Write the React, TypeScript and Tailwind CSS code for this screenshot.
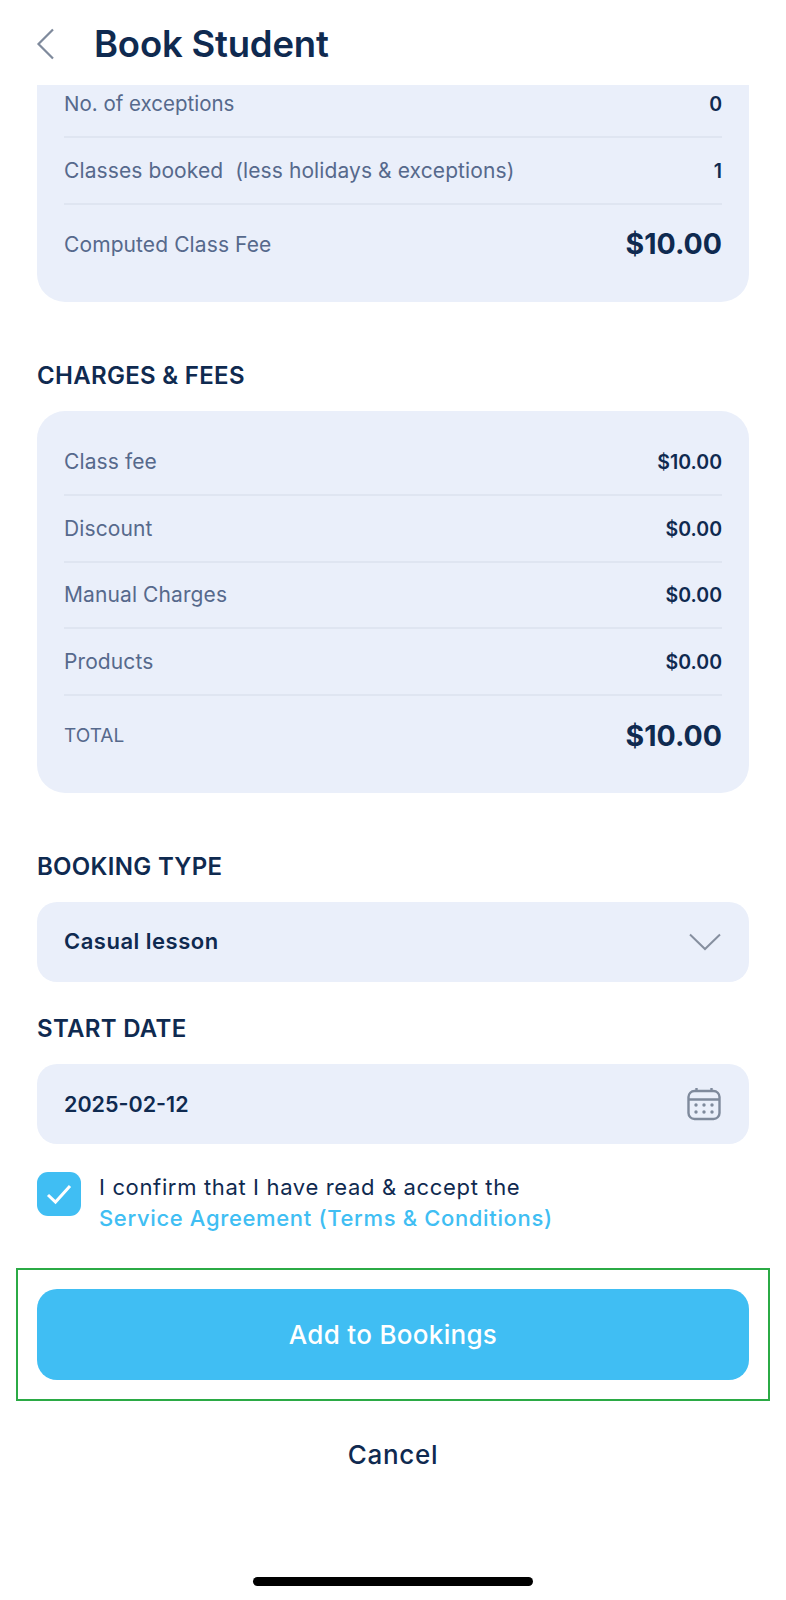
const font = { fontFamily: '"Inter", "Open Sans", sans-serif' };

function Row({ label, value, big, last }: { label: string; value: string; big?: boolean; last?: boolean }) {
  return (
    <div className={`flex items-center justify-between ${last ? "h-[80px]" : "h-[66.6px] border-b-2 border-[#DFE5F1]"}`}>
      <span className={`${label === "TOTAL" ? "text-[19px]" : "text-[21px] tracking-[0.1px]"} whitespace-pre text-[#56698C]`}>{label}</span>
      <span className={big ? "text-[28.5px] font-bold text-[#0F2A50]" : "pt-[2px] text-[19.5px] font-semibold text-[#0F2A50]"}>{value}</span>
    </div>
  );
}

function Title({ children }: { children: string }) {
  return <h2 className="text-[24px] font-semibold leading-none tracking-[0.3px] text-[#0F2A50]">{children}</h2>;
}

export default function App() {
  return (
    <div style={font} className="h-[1600px] w-[786px] overflow-hidden bg-white">
      <header className="flex h-[85px] items-center pl-[36px]">
        <svg width="20" height="32" viewBox="0 0 20 32" fill="none" className="mt-[3px]">
          <path d="M17 1.5 2.5 16 17 30.5" stroke="#7F8A9C" strokeWidth="2.2" />
        </svg>
        <h1 className="ml-[38px] mt-[4px] text-[36.5px] font-semibold tracking-[-0.2px] text-[#0F2A50]">Book Student</h1>
      </header>

      <div className="mx-[37px]">
        <section className="rounded-b-[28px] bg-[#EAEFFA] px-[27px] pb-[17px]">
          <div className="flex h-[53px] items-center justify-between border-b-2 border-[#DFE5F1] pb-[12px]">
            <span className="text-[20.5px] text-[#56698C]">No. of exceptions</span>
            <span className="text-[19.5px] font-semibold text-[#0F2A50]">0</span>
          </div>
          <Row label="Classes booked  (less holidays & exceptions)" value="1" />
          <Row label="Computed Class Fee" value="$10.00" big last />
        </section>

        <div className="mt-[62px]">
          <Title>CHARGES & FEES</Title>
        </div>
        <section className="mt-[23px] rounded-[28px] bg-[#EAEFFA] px-[27px] pt-[19px] pb-[17px]">
          <Row label="Class fee" value="$10.00" />
          <Row label="Discount" value="$0.00" />
          <Row label="Manual Charges" value="$0.00" />
          <Row label="Products" value="$0.00" />
          <Row label="TOTAL" value="$10.00" big last />
        </section>

        <div className="mt-[62px]">
          <Title>BOOKING TYPE</Title>
        </div>
        <div className="mt-[23px] flex h-[80px] items-center justify-between rounded-[20px] bg-[#EAEFFA] pl-[27px] pr-[28px]">
          <span className="text-[22px] font-semibold tracking-[0.5px] text-[#0F2A50]">Casual lesson</span>
          <svg width="32" height="18" viewBox="0 0 32 18" fill="none">
            <path d="M1 1.5 16 16 31 1.5" stroke="#868F9F" strokeWidth="2" />
          </svg>
        </div>

        <div className="mt-[35px]">
          <Title>START DATE</Title>
        </div>
        <div className="mt-[23px] flex h-[80px] items-center justify-between rounded-[20px] bg-[#EAEFFA] pl-[27px] pr-[28px]">
          <span className="text-[21.5px] font-semibold text-[#0F2A50]">2025-02-12</span>
          <svg width="34" height="34" viewBox="0 0 34 34" fill="none" stroke="#7F8A9C" strokeWidth="2.4">
            <rect x="1.5" y="4" width="31" height="28" rx="6" />
            <path d="M1.5 12.5h31M9.5 1v4M24.5 1v4" />
            <g fill="#7F8A9C" stroke="none">
              <circle cx="9" cy="18" r="1.7" />
              <circle cx="17" cy="18" r="1.7" />
              <circle cx="25" cy="18" r="1.7" />
              <circle cx="9" cy="25" r="1.7" />
              <circle cx="17" cy="25" r="1.7" />
              <circle cx="25" cy="25" r="1.7" />
            </g>
          </svg>
        </div>

        <div className="mt-[28px] flex items-start">
          <div className="flex h-[44px] w-[44px] shrink-0 items-center justify-center rounded-[11px] bg-[#40BEF3]">
            <svg width="28" height="22" viewBox="0 0 28 22" fill="none">
              <path d="M3 12 10.5 19 25 3" stroke="white" strokeWidth="3" />
            </svg>
          </div>
          <p className="ml-[18px] h-[64px] text-[22px] leading-[31px] tracking-[0.65px] text-[#0F2A50]">
            I confirm that I have read & accept the
            <br />
            <span className="font-medium text-[#40BEF3]">Service Agreement (Terms & Conditions)</span>
          </p>
        </div>
      </div>

      <div className="mx-[16px] mt-[32px] border-2 border-[#2BAA45] px-[19px] pt-[19px] pb-[19px]">
        <button className="flex h-[91px] w-full items-center justify-center rounded-[20px] bg-[#40BEF3] text-[26px] font-medium tracking-[0.3px] text-white">
          Add to Bookings
        </button>
      </div>

      <p className="mt-[34px] text-center text-[26px] font-medium tracking-[0.7px] text-[#0F2A50]">Cancel</p>

      <div className="mx-auto mt-[103px] h-[9px] w-[280px] rounded-full bg-black" />
    </div>
  );
}
